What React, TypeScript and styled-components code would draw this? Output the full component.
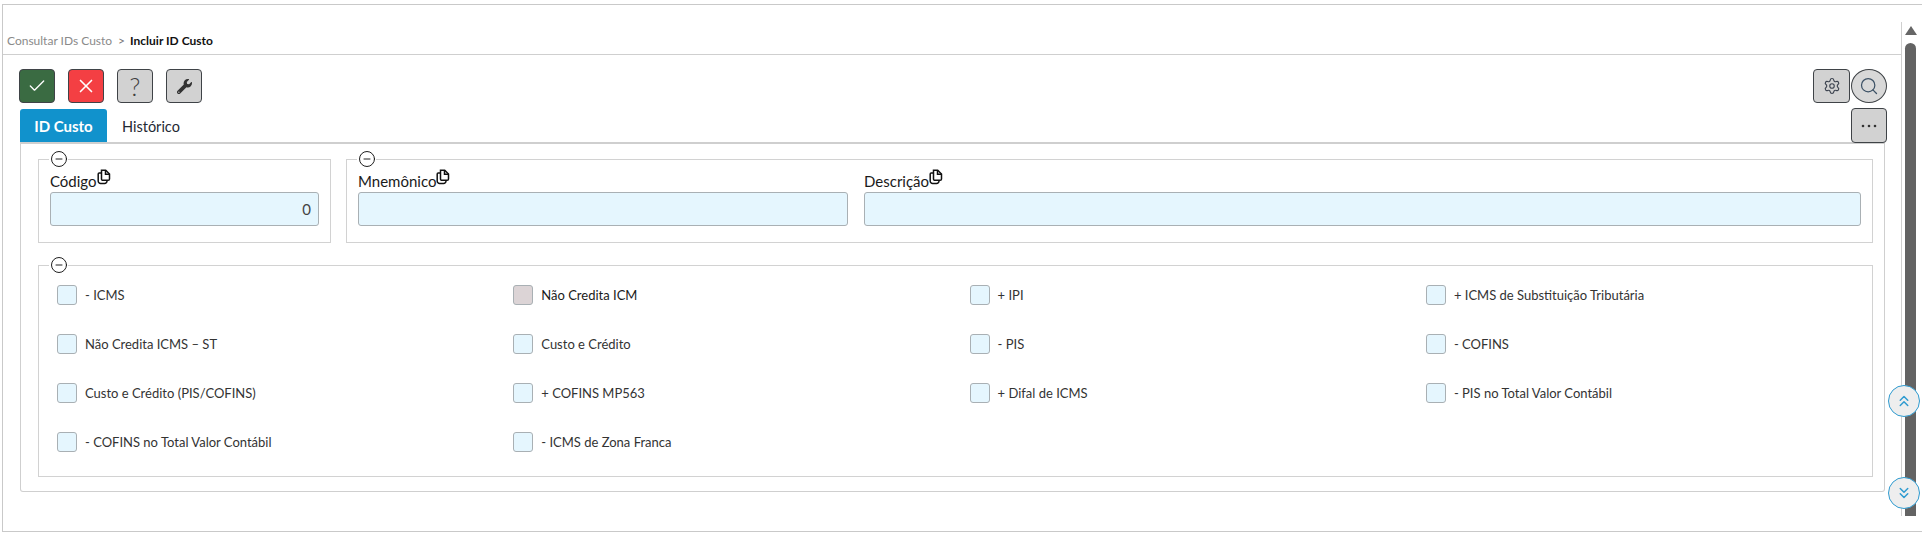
import React from "react";
import styled, {createGlobalStyle} from "styled-components";
import {Check, X, Settings, Search, ChevronsUp, ChevronsDown, CircleMinus} from "lucide-react";
import {FaWrench} from "react-icons/fa";

const GlobalStyle = createGlobalStyle`
    html, body {
        margin: 0;
        padding: 0;
        background: #fff;
        font-family: Lato, "Liberation Sans", sans-serif;
        color: #1f1f1f;
    }
`;

const Page = styled.div`
    position: relative;
    width: 1922px;
    height: 535px;
    padding: 4px 0 3px 2px;
    box-sizing: border-box;
    overflow: hidden;
`;

const Frame = styled.div`
    display: flex;
    height: 100%;
    box-sizing: border-box;
    border-top: 1px solid #c9c9c9;
    border-bottom: 1px solid #c9c9c9;
    border-left: 1px solid #c9c9c9;
`;

const Main = styled.div`
    flex: 1;
    min-width: 0;
    display: flex;
    flex-direction: column;
`;

const Breadcrumb = styled.div`
    height: 50px;
    flex-shrink: 0;
    box-sizing: border-box;
    padding: 28px 0 0 4px;
    border-bottom: 1px solid #cfcfcf;
    font-size: 12px;
    line-height: 15px;
`;

const CrumbLink = styled.span`
    color: #8a8a8a;
`;

const CrumbSep = styled.span`
    color: #777;
    margin: 0 5px 0 6px;
`;

const CrumbCurrent = styled.span`
    font-weight: 700;
    color: #111;
`;

const Toolbar = styled.div`
    display: flex;
    justify-content: space-between;
    padding: 14px 14px 0 16px;
`;

const ButtonGroup = styled.div`
    display: flex;
    gap: ${(props: { gap: number }) => `${props.gap}px`};
`;

const ToolButton = styled.button`
    width: ${(props: { bg: string, wide?: boolean, round?: boolean }) => (props.wide ? 37 : 36)}px;
    height: 34px;
    padding: 0;
    display: flex;
    align-items: center;
    justify-content: center;
    box-sizing: border-box;
    background: ${(props: { bg: string }) => props.bg};
    border: 1px solid #3f4347;
    border-radius: ${(props: { round?: boolean }) => (props.round ? "50%" : "4px")};
    font-family: inherit;
`;

const Question = styled.span`
    font-size: 25px;
    font-weight: 300;
    line-height: 1;
    color: #3f3f3f;
`;

const TabsRow = styled.div`
    display: flex;
    align-items: flex-end;
    justify-content: space-between;
    height: 34px;
    margin-top: 5px;
    padding: 0 14px 0 17px;
`;

const Tabs = styled.div`
    display: flex;
    align-items: center;
`;

const Tab = styled.div`
    height: 33px;
    width: ${(props: { active?: boolean }) => (props.active ? "87px" : "auto")};
    padding: ${(props: { active?: boolean }) => (props.active ? "0" : "1px 15px 0")};
    display: flex;
    align-items: center;
    justify-content: center;
    box-sizing: border-box;
    border-radius: 3px 3px 0 0;
    font-size: ${(props: { active?: boolean }) => (props.active ? "15px" : "14.5px")};
    font-weight: ${(props: { active?: boolean }) => (props.active ? 700 : 400)};
    color: ${(props: { active?: boolean }) => (props.active ? "#fff" : "#1f2933")};
    background: ${(props: { active?: boolean }) => (props.active ? "#1192cc" : "transparent")};
`;

const MoreButton = styled(ToolButton)`
    height: 35px;
    margin-bottom: -1px;
    position: relative;
`;

const Panel = styled.div`
    margin: 0 16px 0 17px;
    height: 350px;
    box-sizing: border-box;
    padding: 15px 11px 0 17px;
    border-top: 2px solid #cfcfcf;
    border-left: 1px solid #cfcfcf;
    border-right: 1px solid #cfcfcf;
    border-bottom: 1px solid #cfcfcf;
    border-radius: 0 0 3px 3px;
    display: flex;
    flex-direction: column;
    gap: 22px;
`;

const TopRow = styled.div`
    display: flex;
    gap: 15px;
`;

const Group = styled.div`
    position: relative;
    flex: ${(props: { grow?: boolean }) => (props.grow ? 1 : "0 0 293px")};
    box-sizing: border-box;
    border: 1px solid #d2d2d2;
`;

const Panel3Group = styled(Group)`
    flex: none;
`;

const Collapse = styled.span`
    position: absolute;
    top: -10px;
    left: 10px;
    width: 19px;
    height: 18px;
    display: flex;
    align-items: center;
    justify-content: center;
    background: #fff;
`;

const FieldRow = styled.div`
    display: flex;
    gap: 16px;
    padding: 8px 11px 16px 11px;
`;

const Field = styled.div`
    flex: ${(props: { basis?: number }) => (props.basis ? `0 0 ${props.basis}px` : 1)};
    min-width: 0;
`;

const FieldLabel = styled.div`
    display: flex;
    align-items: flex-start;
    height: 24px;
    font-size: 15px;
    line-height: 27px;
    color: #1a1a1a;
`;

const CopyIcon = styled.svg`
    width: 14px;
    height: 16px;
    margin-top: 1px;
    flex-shrink: 0;
`;

const Input = styled.div`
    height: 34px;
    box-sizing: border-box;
    padding: 0 7px;
    display: flex;
    align-items: center;
    justify-content: flex-end;
    background: #e5f6fe;
    border: 1px solid #a9b0b4;
    border-radius: 3px;
    font-size: 15px;
    color: #444;
`;

const CheckGrid = styled.div`
    display: grid;
    grid-template-columns: repeat(4, 456.3px);
    grid-auto-rows: 20px;
    row-gap: 29px;
    padding: 19px 0 24px 18px;
`;

const CheckItem = styled.label`
    display: flex;
    align-items: center;
    gap: 8px;
`;

const CheckBox = styled.span`
    width: 20px;
    height: 20px;
    flex-shrink: 0;
    box-sizing: border-box;
    border: 1px solid #a9b0b4;
    border-radius: 3px;
    background: ${(props: { disabled?: boolean }) => (props.disabled ? "#dcd4d6" : "#e5f6fe")};
`;

const CheckText = styled.span`
    font-size: 13px;
    line-height: 20px;
    color: ${(props: { disabled?: boolean }) => (props.disabled ? "#1a1a1a" : "#333")};
`;

const ScrollTrack = styled.div`
    flex: 0 0 18px;
    margin: 17px 3px 15px 0;
    box-sizing: border-box;
    border-left: 1px solid #cfcfcf;
    display: flex;
    flex-direction: column;
    align-items: center;
`;

const ScrollArrow = styled.div`
    width: 0;
    height: 0;
    margin-top: 4px;
    border-left: 6.5px solid transparent;
    border-right: 6.5px solid transparent;
    border-bottom: 9px solid #666;
    flex-shrink: 0;
`;

const ScrollThumb = styled.div`
    flex: 1;
    width: 11px;
    margin-top: 8px;
    background: #636363;
    border-radius: 6px 6px 0 0;
`;

const JumpButton = styled.div`
    position: absolute;
    left: 1888px;
    top: ${(props: { top: number }) => `${props.top}px`};
    width: 32px;
    height: 32px;
    display: flex;
    align-items: center;
    justify-content: center;
    box-sizing: border-box;
    border: 1px solid #2f9bd0;
    border-radius: 50%;
    background: #eeeeee;
`;

const Copy: React.FC<{}> = () => (
    <CopyIcon viewBox="0 0 14 16" fill="none" stroke="#111" strokeWidth="1.5">
        <path d="M4.5 4H2.2a1 1 0 0 0-1 1v7a2.4 2.4 0 0 0 2.4 2.4h4a2.4 2.4 0 0 0 2.4-2.4v-.8"/>
        <path d="M4.5 1.2h4.2l3.8 3.8v5a1.3 1.3 0 0 1-1.3 1.3H5.8A1.3 1.3 0 0 1 4.5 10z"/>
        <path d="M8.5 1.2v4h4"/>
    </CopyIcon>
);

const Minus: React.FC<{}> = () => <CircleMinus size={18} strokeWidth={1.25} color="#111"/>;

const Dots: React.FC<{}> = () => (
    <svg width="18" height="6" viewBox="0 0 18 6" fill="#333">
        <circle cx="3" cy="3" r="1.3"/>
        <circle cx="9" cy="3" r="1.3"/>
        <circle cx="15" cy="3" r="1.3"/>
    </svg>
);

const options: { text: string, disabled?: boolean }[] = [
    {text: "- ICMS"},
    {text: "Não Credita ICM", disabled: true},
    {text: "+ IPI"},
    {text: "+ ICMS de Substituição Tributária"},
    {text: "Não Credita ICMS – ST"},
    {text: "Custo e Crédito"},
    {text: "- PIS"},
    {text: "- COFINS"},
    {text: "Custo e Crédito (PIS/COFINS)"},
    {text: "+ COFINS MP563"},
    {text: "+ Difal de ICMS"},
    {text: "- PIS no Total Valor Contábil"},
    {text: "- COFINS no Total Valor Contábil"},
    {text: "- ICMS de Zona Franca"},
];

const App: React.FC<{}> = () => {
    return (
        <Page>
            <GlobalStyle/>
            <Frame>
                <Main>
                    <Breadcrumb>
                        <CrumbLink>Consultar IDs Custo</CrumbLink>
                        <CrumbSep>&gt;</CrumbSep>
                        <CrumbCurrent>Incluir ID Custo</CrumbCurrent>
                    </Breadcrumb>
                    <Toolbar>
                        <ButtonGroup gap={13}>
                            <ToolButton bg="#3a6b42"><Check size={20} color="#fff" strokeWidth={1.6}/></ToolButton>
                            <ToolButton bg="#f43f43"><X size={22} color="#fff" strokeWidth={1.8}/></ToolButton>
                            <ToolButton bg="#d2d2d2"><Question>?</Question></ToolButton>
                            <ToolButton bg="#d2d2d2"><FaWrench size={15} color="#333"/></ToolButton>
                        </ButtonGroup>
                        <ButtonGroup gap={1}>
                            <ToolButton bg="#d2d2d2" wide><Settings size={18} color="#3d4450" strokeWidth={1.5}/></ToolButton>
                            <ToolButton bg="#d8d8d8" round><Search size={20} color="#3d5266" strokeWidth={1.5}/></ToolButton>
                        </ButtonGroup>
                    </Toolbar>
                    <TabsRow>
                        <Tabs>
                            <Tab active>ID Custo</Tab>
                            <Tab>Histórico</Tab>
                        </Tabs>
                        <MoreButton bg="#d2d2d2"><Dots/></MoreButton>
                    </TabsRow>
                    <Panel>
                        <TopRow>
                            <Group>
                                <Collapse><Minus/></Collapse>
                                <FieldRow>
                                    <Field>
                                        <FieldLabel>Código<Copy/></FieldLabel>
                                        <Input>0</Input>
                                    </Field>
                                </FieldRow>
                            </Group>
                            <Group grow>
                                <Collapse><Minus/></Collapse>
                                <FieldRow>
                                    <Field basis={490}>
                                        <FieldLabel>Mnemônico<Copy/></FieldLabel>
                                        <Input/>
                                    </Field>
                                    <Field>
                                        <FieldLabel>Descrição<Copy/></FieldLabel>
                                        <Input/>
                                    </Field>
                                </FieldRow>
                            </Group>
                        </TopRow>
                        <Panel3Group>
                            <Collapse><Minus/></Collapse>
                            <CheckGrid>
                                {options.map(el => (
                                    <CheckItem key={el.text}>
                                        <CheckBox disabled={el.disabled}/>
                                        <CheckText disabled={el.disabled}>{el.text}</CheckText>
                                    </CheckItem>
                                ))}
                            </CheckGrid>
                        </Panel3Group>
                    </Panel>
                </Main>
                <ScrollTrack>
                    <ScrollArrow/>
                    <ScrollThumb/>
                </ScrollTrack>
            </Frame>
            <JumpButton top={385}><ChevronsUp size={18} color="#2f9bd0" strokeWidth={2}/></JumpButton>
            <JumpButton top={477}><ChevronsDown size={18} color="#2f9bd0" strokeWidth={2}/></JumpButton>
        </Page>
    );
};

export default App;
